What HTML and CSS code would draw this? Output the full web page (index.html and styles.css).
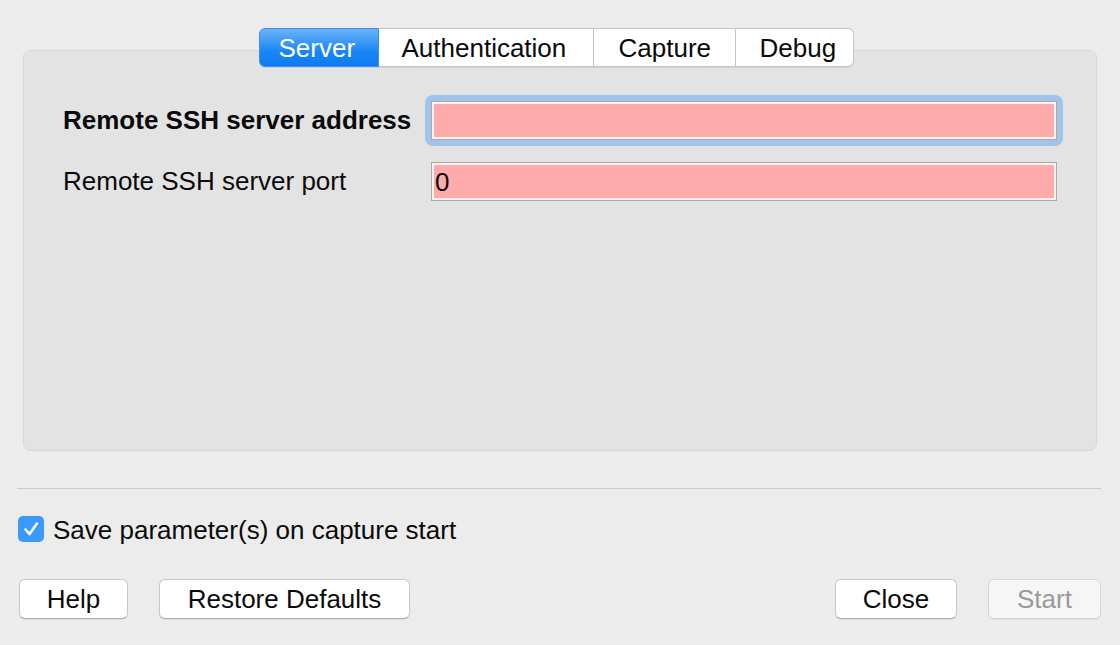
FILE: index.html
```html
<!DOCTYPE html>
<html>
<head>
<meta charset="utf-8">
<link rel="stylesheet" href="styles.css">
</head>
<body>
<div class="dialog">
  <div class="tabs">
    <div class="tab tab-server active">Server</div>
    <div class="tab tab-auth">Authentication</div>
    <div class="tab tab-capture">Capture</div>
    <div class="tab tab-debug">Debug</div>
  </div>
  <div class="pane">
    <div class="form">
      <div class="label bold">Remote SSH server address</div>
      <div class="ring"><div class="field"></div></div>
      <div class="label">Remote SSH server port</div>
      <div class="field">0</div>
    </div>
  </div>
</div>
<div class="separator"></div>
<div class="check-row">
  <span class="checkbox">
    <svg width="26" height="26" viewBox="0 0 26 26"><path d="M7.5 13.5 L11.5 18 L19 7.5" fill="none" stroke="#fff" stroke-width="2.6" stroke-linecap="round" stroke-linejoin="round"/></svg>
  </span>
  <span class="check-label">Save parameter(s) on capture start</span>
</div>
<div class="buttons">
  <div class="btn btn-help">Help</div>
  <div class="btn btn-restore">Restore Defaults</div>
  <div class="spacer"></div>
  <div class="btn btn-close">Close</div>
  <div class="btn btn-start disabled">Start</div>
</div>
</body>
</html>
```
FILE: styles.css
```css
html, body {
  margin: 0;
  padding: 0;
  background: #ececec;
  width: 1120px;
  height: 645px;
  overflow: hidden;
  font-family: "Liberation Sans", Arial, Helvetica, sans-serif;
  font-size: 26px;
  color: #0a0a0a;
}

.dialog {
  padding: 28px 23px 0 23px;
}

.tabs {
  display: flex;
  justify-content: center;
  padding-right: 8px;
  position: relative;
  z-index: 2;
}

.tab {
  height: 37px;
  line-height: 39px;
  background: #fff;
  border: 1px solid #c6c6c6;
  border-left: none;
  text-align: left;
  box-shadow: 0 1px 1px rgba(0,0,0,0.08);
  box-sizing: content-box;
}

.tab-server { width: 99px; padding-left: 19px; border-left: 1px solid #3d8ff0; border-radius: 6px 0 0 6px; }
.tab-auth { width: 191px; padding-left: 23px; }
.tab-capture { width: 116px; padding-left: 25px; }
.tab-debug { width: 93px; padding-left: 24px; border-radius: 0 6px 6px 0; }

.tab.active {
  background: linear-gradient(#6cb3fa, #1a86f4 60%, #0b7cf0);
  border-color: #3d8ff0;
  color: #fff;
}

.pane {
  margin-top: -17px;
  height: 399px;
  background: #e3e3e3;
  border: 1px solid #d8d8d8;
  border-radius: 7px;
  box-sizing: content-box;
}

.form {
  display: grid;
  grid-template-columns: 368px 1fr;
  row-gap: 22px;
  align-items: center;
  padding: 50px 39px 0 39px;
}

.label {
  line-height: 39px;
}

.bold {
  font-weight: bold;
}

.ring {
  margin: -6px -6px -6px -6px;
  padding: 6px;
  background: #a0c4ea;
  border-radius: 8px;
}

.field {
  height: 37px;
  line-height: 39px;
  background: #ffabab;
  border: 1px solid #a9a9a9;
  box-shadow: inset 0 0 0 2px #fff3f3;
  padding-left: 3px;
}

.separator {
  height: 1px;
  background: #cacaca;
  margin: 37px 19px 0 17px;
}

.check-row {
  display: flex;
  align-items: center;
  padding: 27px 0 0 18px;
  height: 26px;
}

.check-label {
  position: relative;
  top: 1px;
}

.checkbox {
  width: 26px;
  height: 26px;
  border-radius: 5px;
  background: #3b99fc;
  display: inline-flex;
  margin-right: 9px;
}

.buttons {
  display: flex;
  padding: 37px 19px 0 19px;
}

.spacer {
  flex: 1;
}

.btn {
  height: 38px;
  line-height: 39px;
  text-align: center;
  background: #fff;
  border: 1px solid #c8c8c8;
  border-bottom-color: #aeaeae;
  border-radius: 6px;
  box-shadow: 0 1px 1px rgba(0,0,0,0.06);
}

.btn-help { width: 107px; }
.btn-restore { width: 249px; margin-left: 31px; }
.btn-close { width: 120px; }
.btn-start { width: 111px; margin-left: 31px; }

.btn.disabled {
  background: #f6f6f6;
  color: #9a9a9a;
  border-color: #d6d6d6;
}
```
